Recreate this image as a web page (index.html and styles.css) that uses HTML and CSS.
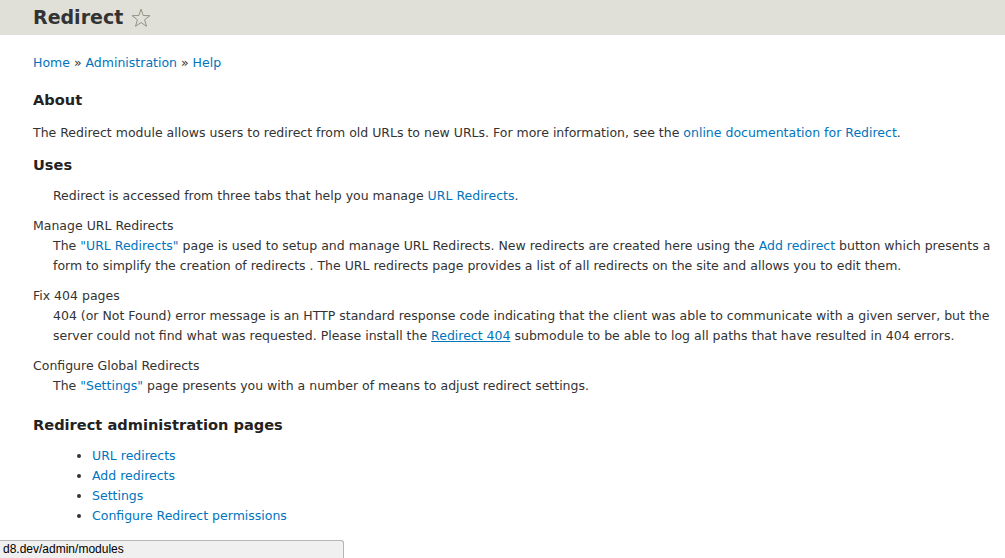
FILE: index.html
```html
<!DOCTYPE html>
<html lang="en">
<head>
<meta charset="utf-8">
<title>Redirect</title>
<link rel="stylesheet" href="styles.css">
</head>
<body>
<header class="page-header">
  <h1 class="page-title">Redirect <svg class="star" viewBox="0 0 20 20" width="20" height="20"><path d="M10 1.2 L12.2 7.5 L18.9 7.7 L13.6 11.8 L15.5 18.3 L10 14.5 L4.5 18.3 L6.4 11.8 L1.1 7.7 L7.8 7.5 Z" fill="none" stroke="#8a8a78" stroke-width="0.9" stroke-linejoin="miter"/></svg></h1>
</header>
<main class="content">
  <nav class="breadcrumb"><a href="#">Home</a> » <a href="#">Administration</a> » <a href="#">Help</a></nav>
  <h2 class="section-title">About</h2>
  <p class="text">The Redirect module allows users to redirect from old URLs to new URLs. For more information, see the <a href="#">online documentation for Redirect</a>.</p>
  <h2 class="section-title uses-title">Uses</h2>
  <dl class="uses">
    <dd class="uses-intro">Redirect is accessed from three tabs that help you manage <a href="#">URL Redirects</a>.</dd>
    <dt>Manage URL Redirects</dt>
    <dd>The <a href="#">"URL Redirects"</a> page is used to setup and manage URL Redirects. New redirects are created here using the <a href="#">Add redirect</a> button which presents a form to simplify the creation of redirects . The URL redirects page provides a list of all redirects on the site and allows you to edit them.</dd>
    <dt>Fix 404 pages</dt>
    <dd>404 (or Not Found) error message is an HTTP standard response code indicating that the client was able to communicate with a given server, but the server could not find what was requested. Please install the <a href="#" class="underlined">Redirect 404</a> submodule to be able to log all paths that have resulted in 404 errors.</dd>
    <dt>Configure Global Redirects</dt>
    <dd>The <a href="#">"Settings"</a> page presents you with a number of means to adjust redirect settings.</dd>
  </dl>
  <h2 class="section-title admin-title">Redirect administration pages</h2>
  <ul class="admin-links">
    <li><a href="#">URL redirects</a></li>
    <li><a href="#">Add redirects</a></li>
    <li><a href="#">Settings</a></li>
    <li><a href="#">Configure Redirect permissions</a></li>
  </ul>
</main>
<div class="status-bar">d8.dev/admin/modules</div>
</body>
</html>
```

FILE: styles.css
```css
html, body {
  margin: 0;
  padding: 0;
  background: #fff;
}
body {
  font-family: "DejaVu Sans", "Liberation Sans", sans-serif;
  font-size: 12.5px;
  color: #333;
  line-height: 20px;
}
a {
  color: #0074bd;
  text-decoration: none;
}
a.underlined {
  text-decoration: underline;
}
.page-header {
  background: #e0e0d8;
  height: 35px;
  padding: 0 33px;
}
.page-title {
  margin: 0;
  font-size: 19px;
  line-height: 35px;
  font-weight: bold;
  color: #333;
  display: flex;
  align-items: center;
  gap: 8px;
}
.star {
  display: block;
}
.content {
  padding: 18px 6px 0 33px;
}
.breadcrumb {
  line-height: 20px;
}
.section-title {
  margin: 16px 0 0;
  font-size: 14.6px;
  line-height: 22px;
  font-weight: bold;
  color: #222;
}
.text {
  margin: 12px 0 0;
}
.uses-title {
  margin-top: 11px;
}
.uses {
  margin: 10px 0 0;
}
.uses dt {
  margin-top: 10px;
}
.uses dd {
  margin: 0 0 0 20px;
}
.uses dd.uses-intro {
  margin-top: 0;
}
.admin-title {
  margin-top: 18px;
}
.admin-links {
  margin: 10px 0 0;
  padding-left: 59px;
}
.status-bar {
  position: fixed;
  left: 0;
  bottom: 0;
  width: 340px;
  height: 17px;
  border: 1px solid #b5b5b5;
  border-left: none;
  border-bottom: none;
  border-radius: 0 3px 0 0;
  background: #f0f0f0;
  font-family: "Liberation Sans", Arial, sans-serif;
  font-size: 12px;
  line-height: 17px;
  padding-left: 3px;
  color: #000;
}
```
